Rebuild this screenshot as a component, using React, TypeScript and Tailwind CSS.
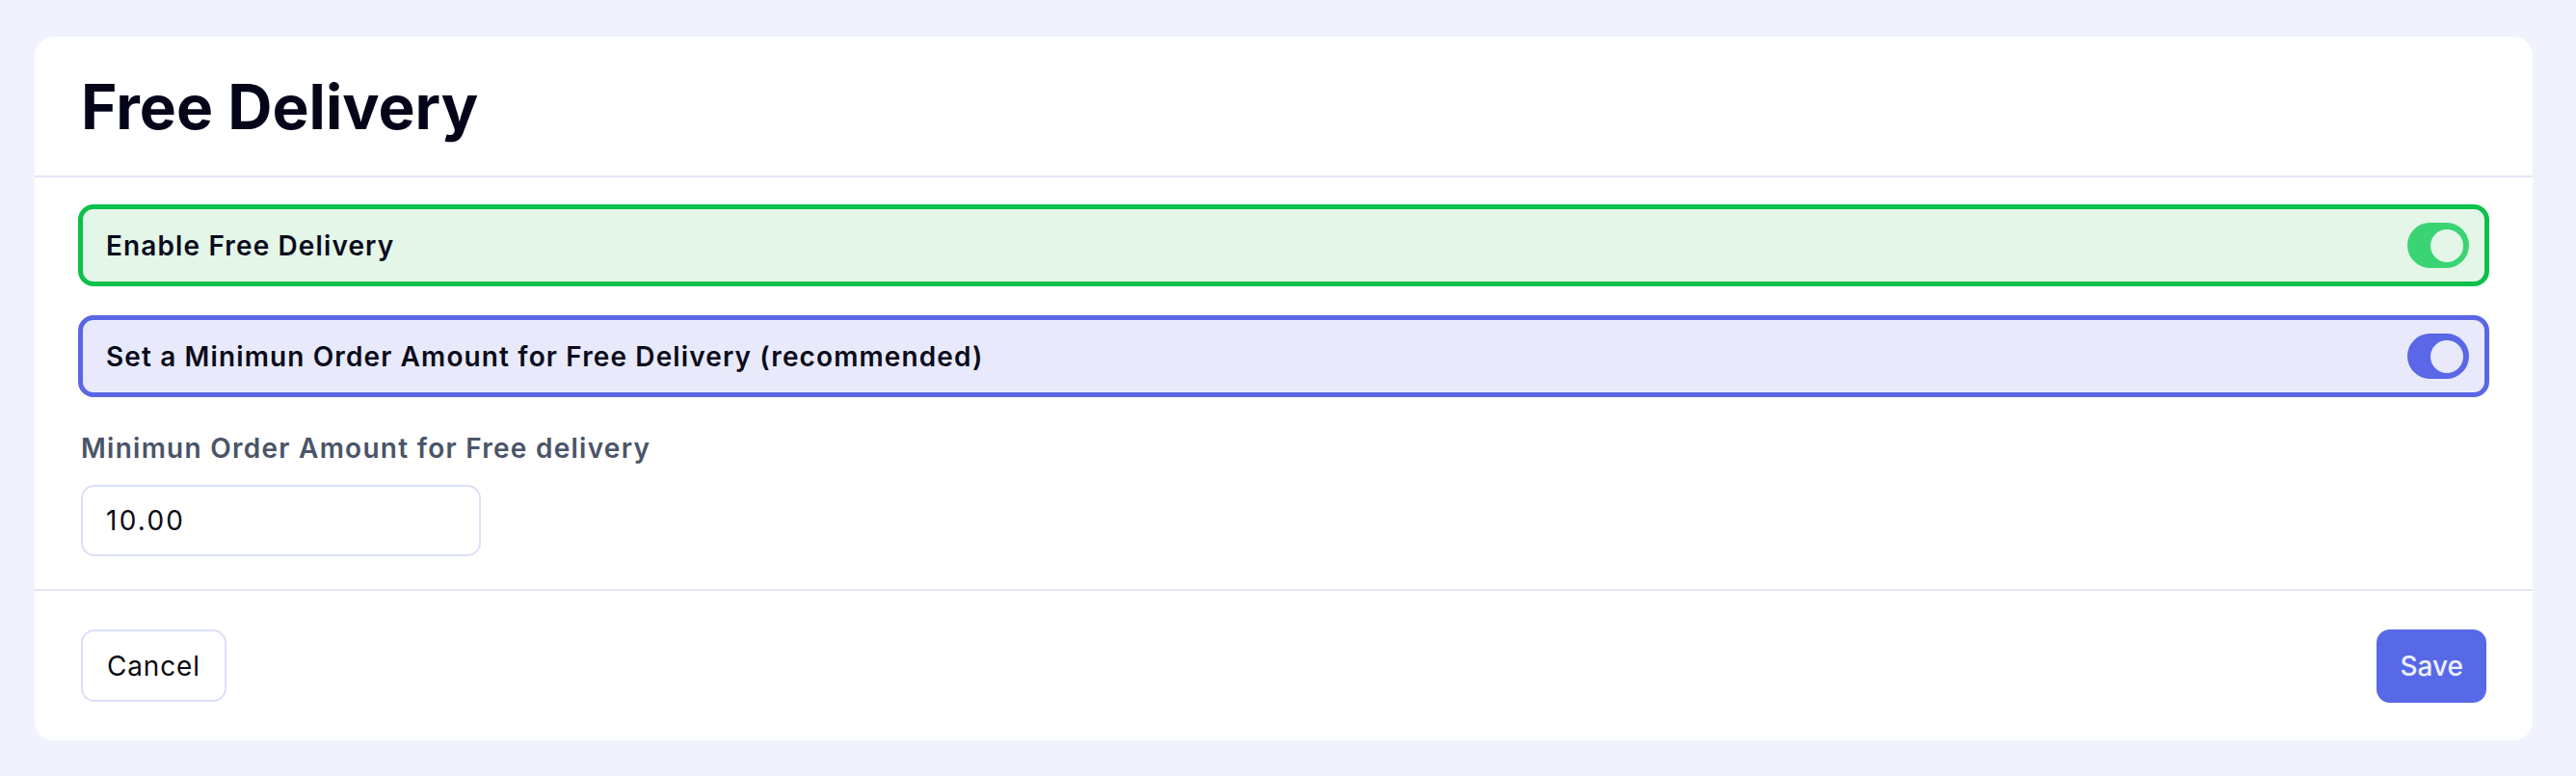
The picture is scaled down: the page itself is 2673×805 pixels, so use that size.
import { useState } from "react";

interface ToggleRowProps {
  label: string;
  checked: boolean;
  onChange: (v: boolean) => void;
  tone: "green" | "blue";
}

function ToggleRow({ label, checked, onChange, tone }: ToggleRowProps) {
  const box =
    tone === "green"
      ? "border-[#0cc04c] bg-[#e3f6e8]"
      : "border-[#5a67e4] bg-[#e8eafb]";
  const track = tone === "green" ? "bg-[#3bd474]" : "bg-[#5a67e6]";
  const knob = tone === "green" ? "bg-[#e3f6e8]" : "bg-[#e8eafb]";

  return (
    <div
      className={`-mx-[3px] h-[85px] flex items-center justify-between border-[5px] rounded-[16px] pl-[24px] pr-[16px] ${box}`}
    >
      <span className="text-[28px] tracking-[0.04em] font-semibold text-[#0b0b1c]">{label}</span>
      <button
        onClick={() => onChange(!checked)}
        className={`w-[64px] h-[47px] rounded-full flex items-center px-[6px] ${track} ${
          checked ? "justify-end" : "justify-start"
        }`}
      >
        <span className={`w-[34px] h-[34px] rounded-full ${knob}`} />
      </button>
    </div>
  );
}

export default function App() {
  const [enabled, setEnabled] = useState(true);
  const [useMinimum, setUseMinimum] = useState(true);
  const [amount, setAmount] = useState("10.00");

  return (
    <div
      className="min-h-screen bg-[#f0f3fe] pl-[36px] pr-[45px] pt-[38px] pb-[37px]"
      style={{ fontFamily: "Inter, 'Liberation Sans', sans-serif" }}
    >
      <div className="bg-white rounded-[20px] h-[730px] flex flex-col">
        {/* Header */}
        <div className="h-[146px] flex items-center px-[48px] border-b-2 border-[#e3e6f8]">
          <h1 className="text-[64px] leading-none font-bold text-[#05051a] pt-[2px]">
            Free Delivery
          </h1>
        </div>

        {/* Body */}
        <div className="px-[48px] pt-[28px] pb-[34px] border-b-2 border-[#e3e6f8]">
          <div className="flex flex-col gap-[30px]">
            <ToggleRow
              label="Enable Free Delivery"
              checked={enabled}
              onChange={setEnabled}
              tone="green"
            />
            <ToggleRow
              label="Set a Minimun Order Amount for Free Delivery (recommended)"
              checked={useMinimum}
              onChange={setUseMinimum}
              tone="blue"
            />
          </div>

          <label className="block mt-[35px] text-[28px] leading-[36px] tracking-[0.045em] font-semibold text-[#4a5568]">
            Minimun Order Amount for Free delivery
          </label>
          <input
            value={amount}
            onChange={(e) => setAmount(e.target.value)}
            className="mt-[20px] block w-[415px] h-[74px] rounded-[14px] border-2 border-[#dbe0f7] px-[24px] text-[28px] tracking-[0.08em] text-[#0b0b14] outline-none"
          />
        </div>

        {/* Footer */}
        <div className="flex-1 flex items-center justify-between px-[48px]">
          <button className="h-[75px] px-[25px] rounded-[14px] border-2 border-[#dbe0f7] bg-white text-[28px] tracking-[0.03em] text-[#0b0b14]">
            Cancel
          </button>
          <button className="h-[76px] px-[24px] rounded-[14px] bg-[#5869e7] text-[28px] font-medium text-[#eef1ff]">
            Save
          </button>
        </div>
      </div>
    </div>
  );
}
